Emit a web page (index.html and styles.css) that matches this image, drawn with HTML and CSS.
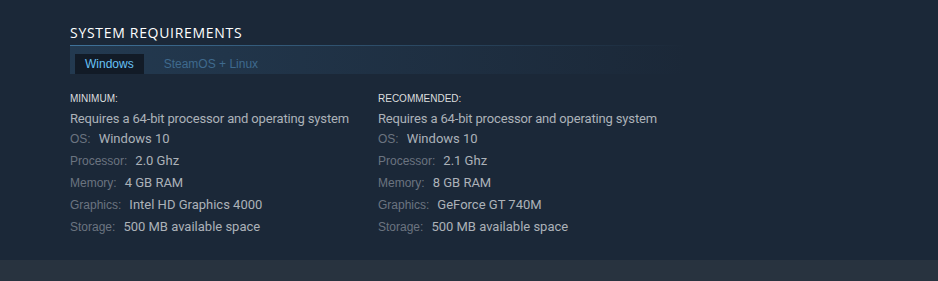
FILE: index.html
```html
<!DOCTYPE html>
<html>
<head>
<meta charset="utf-8">
<link rel="stylesheet" href="styles.css">
</head>
<body>
<div class="page">
  <div class="sysreq">
    <h2 class="title">System Requirements</h2>
    <div class="rule"></div>
    <div class="tabs">
      <div class="tab active">Windows</div>
      <div class="tab">SteamOS + Linux</div>
    </div>
    <div class="cols">
      <div class="col">
        <div class="heading">Minimum:</div>
        <ul class="list">
          <li class="first">Requires a 64-bit processor and operating system</li>
          <li><span class="label">OS:</span>Windows 10</li>
          <li><span class="label">Processor:</span>2.0 Ghz</li>
          <li><span class="label">Memory:</span>4 GB RAM</li>
          <li><span class="label">Graphics:</span>Intel HD Graphics 4000</li>
          <li><span class="label">Storage:</span>500 MB available space</li>
        </ul>
      </div>
      <div class="col">
        <div class="heading">Recommended:</div>
        <ul class="list">
          <li class="first">Requires a 64-bit processor and operating system</li>
          <li><span class="label">OS:</span>Windows 10</li>
          <li><span class="label">Processor:</span>2.1 Ghz</li>
          <li><span class="label">Memory:</span>8 GB RAM</li>
          <li><span class="label">Graphics:</span>GeForce GT 740M</li>
          <li><span class="label">Storage:</span>500 MB available space</li>
        </ul>
      </div>
    </div>
  </div>
</div>
<div class="footer"></div>
</body>
</html>
```
FILE: styles.css
```css
html, body {
  margin: 0;
  padding: 0;
  background: #1b2838;
}
.page {
  height: 260px;
  padding-left: 70px;
  box-sizing: border-box;
}
.sysreq {
  width: 616px;
}
.title {
  margin: 0;
  padding-top: 23px;
  padding-bottom: 2px;
  font-family: "Open Sans", "Noto Sans", sans-serif;
  font-size: 14px;
  line-height: 20px;
  font-weight: 400;
  letter-spacing: 0.05em;
  text-transform: uppercase;
  color: #ffffff;
}
.rule {
  height: 1px;
  background: linear-gradient(to right, #3f7299 0%, rgba(63, 114, 153, 0) 100%);
}
.tabs {
  display: flex;
  padding: 8px 0 0 5px;
  background: linear-gradient(to right, rgba(50, 90, 125, 0.35) 0%, rgba(50, 90, 125, 0) 100%);
}
.tab {
  font-family: "Liberation Sans", Arial, sans-serif;
  font-size: 12px;
  line-height: 20px;
  padding: 0 10px;
  margin-right: 10px;
  color: #3f6a8e;
}
.tab.active {
  background: #121b27;
  color: #67c1f5;
}
.cols {
  display: grid;
  grid-template-columns: 308px 308px;
  padding-top: 18px;
}
.heading {
  font-family: "Liberation Sans", Arial, sans-serif;
  font-size: 10px;
  line-height: 14px;
  text-transform: uppercase;
  color: #dcdedf;
}
.list {
  list-style: none;
  margin: 4px 0 0;
  padding: 0;
}
.list li {
  font-family: Roboto, "Open Sans", sans-serif;
  font-size: 13px;
  line-height: 18px;
  height: 18px;
  margin-bottom: 4px;
  color: #acb2b8;
  white-space: nowrap;
}
.list li.first {
  margin-bottom: 2px;
  letter-spacing: -0.15px;
}
.label {
  font-family: "Liberation Sans", Arial, sans-serif;
  font-size: 12px;
  color: #6b7480;
  margin-right: 8px;
}
.footer {
  height: 21px;
  background: #28333f;
}
```
